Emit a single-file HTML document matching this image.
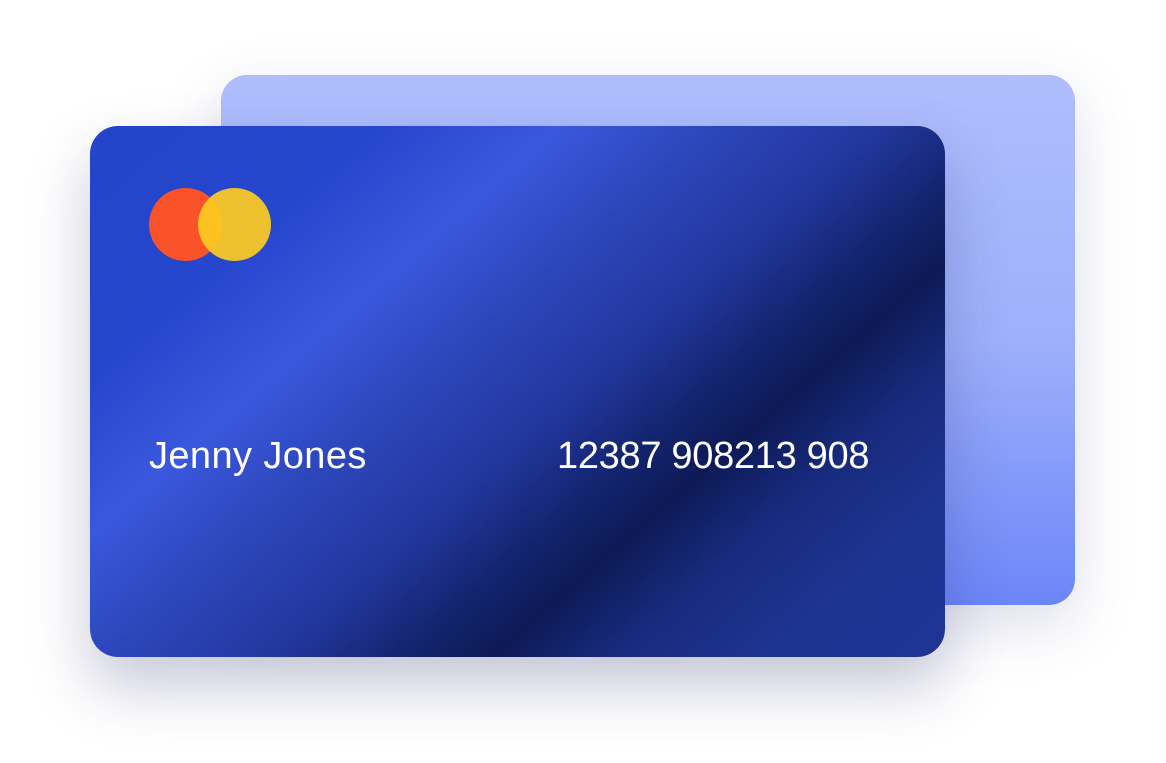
<!DOCTYPE html>
<html><head><style>
html,body{margin:0;padding:0;background:#fff;width:1166px;height:763px;overflow:hidden;position:relative}
.back{position:absolute;left:221px;top:75px;width:854px;height:530px;border-radius:26px;
background:linear-gradient(180deg,#aebdfc 0%,#9eb0fb 50%,#6c86f8 100%);
box-shadow:0 20px 60px rgba(60,70,140,0.18)}
.front{position:absolute;left:90px;top:126px;width:855px;height:531px;border-radius:28px;overflow:hidden;
background:linear-gradient(139deg,#2444c9 0%,#2646cd 20%,#3a58dd 32%,#2d47bc 42%,#22379e 54%,#13246e 63%,#0d1a56 69%,#172a7c 77%,#1e3492 88%,#1f3596 100%);
box-shadow:0 30px 60px rgba(30,40,100,0.25)}
.c{position:absolute;border-radius:50%;width:73px;height:73px;top:62px}
.r{left:59px;background:#fa5229}
.y{left:108px;background:rgba(253,204,32,0.92)}
.t{position:absolute;top:311px;color:#fff;font-family:"Liberation Sans",sans-serif;font-size:38px;line-height:1;letter-spacing:0.4px}
</style></head><body>
<div class="back"></div>
<div class="front">
<div class="c r"></div><div class="c y"></div>
<div class="t" style="left:59px">Jenny Jones</div>
<div class="t" style="left:467px;letter-spacing:-0.3px">12387 908213 908</div>
</div>
</body></html>
